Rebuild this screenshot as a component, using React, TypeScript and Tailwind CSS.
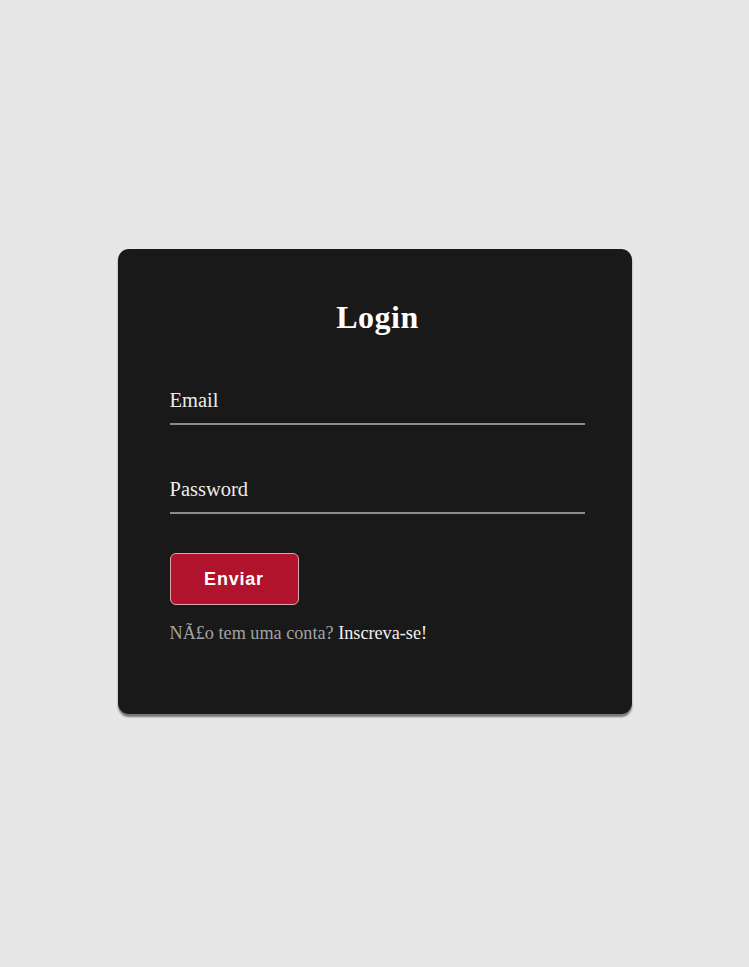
export default function App() {
  return (
    <div className="min-h-screen w-full bg-[#e7e7e7] flex items-center justify-center font-['Liberation_Serif',serif]">
      <div className="w-[514px] h-[465px] bg-[#191919] rounded-[11px] shadow-[0_3px_2px_#767676] pt-[51px] pl-[52px] pr-[47px] mt-[-4px]">
        <h2 className="text-center text-[32px] leading-[34px] font-bold text-white tracking-[0.5px] pl-[1px]">
          Login
        </h2>

        <form className="mt-[43px] flex flex-col" onSubmit={(e) => e.preventDefault()}>
          <input
            type="email"
            placeholder="Email"
            className="h-[48px] w-full bg-transparent border-0 border-b-2 border-[#8c8c8c] text-[20.5px] text-[#ececec] placeholder:text-[#ececec] outline-none font-['Liberation_Serif',serif]"
          />
          <input
            type="password"
            placeholder="Password"
            className="mt-[41px] h-[48px] w-full bg-transparent border-0 border-b-2 border-[#8c8c8c] text-[20.5px] text-[#ececec] placeholder:text-[#ececec] outline-none font-['Liberation_Serif',serif]"
          />

          <button
            type="submit"
            className="mt-[39px] w-[129px] h-[52px] rounded-[6px] bg-[#b0132b] border border-[#d9a9b0] text-white text-[18px] font-bold tracking-[0.8px] font-['Liberation_Sans',Arial,sans-serif] flex items-center justify-center"
          >
            Enviar
          </button>

          <p className="mt-[18px] text-[18.2px] leading-[21px] text-[#a3a3a3]">
            NÃ£o tem uma conta?{' '}
            <a href="#" className="text-[#f2f2f2]">
              Inscreva-se!
            </a>
          </p>
        </form>
      </div>
    </div>
  )
}
